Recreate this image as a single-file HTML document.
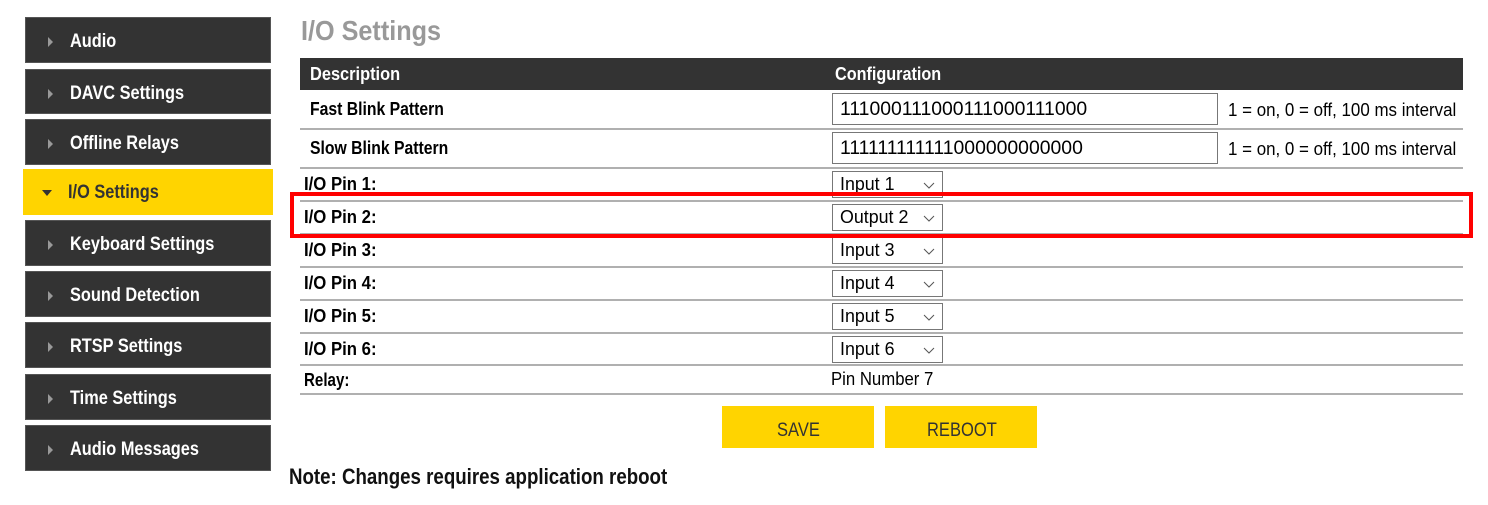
<!DOCTYPE html>
<html><head><meta charset="utf-8">
<style>
*{margin:0;padding:0;box-sizing:border-box}
body{width:1488px;height:505px;background:#fff;position:relative;overflow:hidden;font-family:"Liberation Sans",sans-serif}
.a{position:absolute}
.t{position:absolute;white-space:nowrap;transform:scaleX(0.82);transform-origin:left center}
.nav{position:absolute;left:25px;width:246px;height:46px;background:#333;border:1px solid #555}
.nav .t{left:44px;top:13px;color:#fff;font-size:19px;font-weight:bold;transform:scaleX(0.86)}
.nav .ar{position:absolute;left:22px;top:19px;width:0;height:0;border-left:5px solid #999;border-top:5px solid transparent;border-bottom:5px solid transparent}
.line{position:absolute;left:300px;width:1163px;height:2px;background:#b0b0b0}
.lbl{font-weight:bold;font-size:18px;color:#000;transform:scaleX(0.93)}
.lb2{font-weight:bold;font-size:18px;color:#000;transform:scaleX(0.875)}
.sel{position:absolute;left:832px;width:111px;height:27px;border:1px solid #777;background:#fff}
.sel .t{left:7px;top:2px;font-size:18px;color:#000;transform:scaleX(0.99)}
.sel svg{position:absolute;right:7px;top:10px}
.inp{position:absolute;left:832px;width:386px;height:32px;border:1px solid #777;background:#fff}
.inp .t{left:7px;top:5px;font-size:19px;transform:scaleX(1.02)}
.btn{position:absolute;top:406px;width:152px;height:42px;background:#ffd400}
.btn .t{top:14px;font-size:19px;color:#333;transform:scaleX(0.87)}
.hint{font-size:18px;transform:scaleX(0.94)}
</style></head><body>

<div class="nav" style="top:17px"><div class="ar"></div><div class="t">Audio</div></div>
<div class="nav" style="top:69px;height:45px"><div class="ar"></div><div class="t">DAVC Settings</div></div>
<div class="nav" style="top:119px"><div class="ar"></div><div class="t">Offline Relays</div></div>
<div class="a" style="left:23px;top:169px;width:250px;height:46px;background:#ffd400">
  <div class="a" style="left:19px;top:21px;border-top:6px solid #333;border-left:5px solid transparent;border-right:5px solid transparent"></div>
  <div class="t" style="left:45px;top:13px;font-size:19px;color:#333;font-weight:bold;transform:scaleX(0.86)">I/O Settings</div>
</div>
<div class="nav" style="top:220px"><div class="ar"></div><div class="t">Keyboard Settings</div></div>
<div class="nav" style="top:271px"><div class="ar"></div><div class="t">Sound Detection</div></div>
<div class="nav" style="top:322px"><div class="ar"></div><div class="t">RTSP Settings</div></div>
<div class="nav" style="top:374px"><div class="ar"></div><div class="t">Time Settings</div></div>
<div class="nav" style="top:425px"><div class="ar"></div><div class="t">Audio Messages</div></div>

<div class="t" style="left:301px;top:15px;font-size:28px;font-weight:bold;color:#999;transform:scaleX(0.9)">I/O Settings</div>

<div class="a" style="left:300px;top:58px;width:1163px;height:32px;background:#333"></div>
<div class="t" style="left:310px;top:64px;font-size:18px;font-weight:bold;color:#fff;transform:scaleX(0.91)">Description</div>
<div class="t" style="left:835px;top:64px;font-size:18px;font-weight:bold;color:#fff;transform:scaleX(0.9)">Configuration</div>

<div class="t lb2" style="left:310px;top:99px">Fast Blink Pattern</div>
<div class="inp" style="top:93px"><div class="t">111000111000111000111000</div></div>
<div class="t hint" style="left:1228px;top:100px">1 = on, 0 = off, 100 ms interval</div>
<div class="line" style="top:128px"></div>

<div class="t lb2" style="left:310px;top:138px">Slow Blink Pattern</div>
<div class="inp" style="top:132px"><div class="t">111111111111000000000000</div></div>
<div class="t hint" style="left:1228px;top:139px">1 = on, 0 = off, 100 ms interval</div>
<div class="line" style="top:167px"></div>

<div class="t lbl" style="left:304px;top:174px">I/O Pin 1:</div>
<div class="sel" style="top:171px"><div class="t">Input 1</div><svg width="12" height="7"><path d="M1 1L6 6L11 1" stroke="#555" fill="none"/></svg></div>
<div class="line" style="top:200px"></div>

<div class="t lbl" style="left:304px;top:207px">I/O Pin 2:</div>
<div class="sel" style="top:204px"><div class="t">Output 2</div><svg width="12" height="7"><path d="M1 1L6 6L11 1" stroke="#555" fill="none"/></svg></div>
<div class="line" style="top:233px"></div>

<div class="t lbl" style="left:304px;top:240px">I/O Pin 3:</div>
<div class="sel" style="top:237px"><div class="t">Input 3</div><svg width="12" height="7"><path d="M1 1L6 6L11 1" stroke="#555" fill="none"/></svg></div>
<div class="line" style="top:266px"></div>

<div class="t lbl" style="left:304px;top:273px">I/O Pin 4:</div>
<div class="sel" style="top:270px"><div class="t">Input 4</div><svg width="12" height="7"><path d="M1 1L6 6L11 1" stroke="#555" fill="none"/></svg></div>
<div class="line" style="top:299px"></div>

<div class="t lbl" style="left:304px;top:306px">I/O Pin 5:</div>
<div class="sel" style="top:303px"><div class="t">Input 5</div><svg width="12" height="7"><path d="M1 1L6 6L11 1" stroke="#555" fill="none"/></svg></div>
<div class="line" style="top:332px"></div>

<div class="t lbl" style="left:304px;top:339px">I/O Pin 6:</div>
<div class="sel" style="top:336px"><div class="t">Input 6</div><svg width="12" height="7"><path d="M1 1L6 6L11 1" stroke="#555" fill="none"/></svg></div>
<div class="line" style="top:364px"></div>

<div class="t lbl" style="left:304px;top:370px;transform:scaleX(0.84)">Relay:</div>
<div class="t" style="left:831px;top:369px;font-size:18px;transform:scaleX(0.93)">Pin Number 7</div>
<div class="line" style="top:393px"></div>

<div class="a" style="left:290px;top:192px;width:1183px;height:46px;border:4px solid #f00"></div>

<div class="btn" style="left:722px"><div class="t" style="left:55px">SAVE</div></div>
<div class="btn" style="left:885px"><div class="t" style="left:42px">REBOOT</div></div>

<div class="t" style="left:289px;top:464px;font-size:22px;font-weight:bold;color:#111;transform:scaleX(0.85)">Note: Changes requires application reboot</div>
</body></html>
